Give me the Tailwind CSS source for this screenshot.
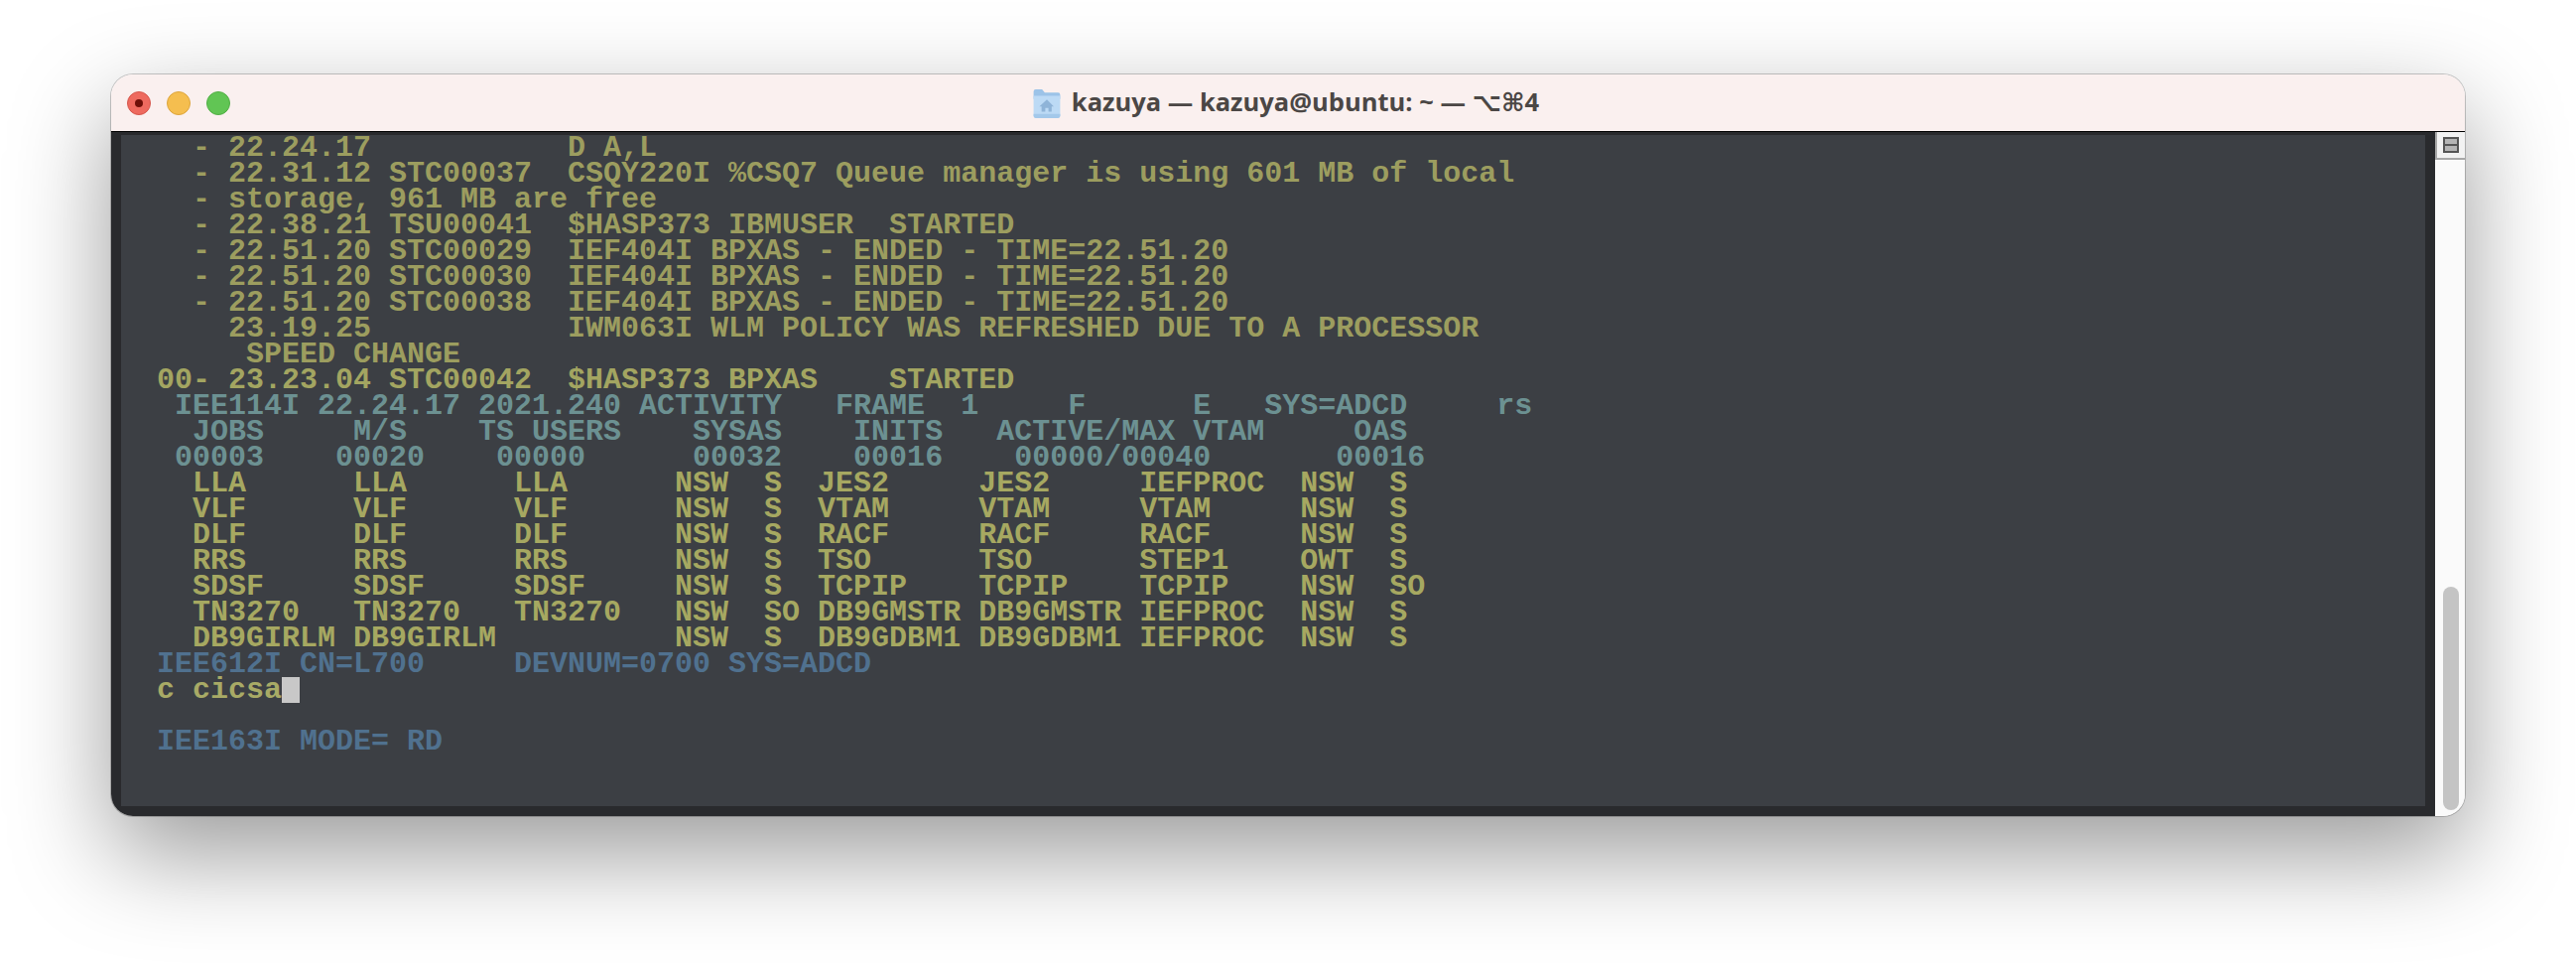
<!DOCTYPE html>
<html lang="en">
<head>
  <meta charset="UTF-8" />
  <title>kazuya — kazuya@ubuntu: ~</title>
  <script src="https://cdn.jsdelivr.net/npm/@tailwindcss/browser@4"></script>
</head>
<body class="bg-white w-[2596px] h-[970px] overflow-hidden">
  <!-- Terminal window -->
  <div class="ml-[112px] mt-[75px] w-[2372px] h-[747px] flex flex-col rounded-[22px] overflow-hidden shadow-[0_0_0_1px_rgba(0,0,0,0.2),0_38px_100px_0_rgba(0,0,0,0.4)]">
    <!-- Title bar -->
    <div class="relative h-[57px] shrink-0 bg-[#faf0ef] flex items-center justify-center">
      <div class="absolute left-[16px] top-[17px] flex gap-[16px]">
        <div class="w-[24px] h-[24px] rounded-full bg-[#ee6a5f] border border-[#d5574d] flex items-center justify-center">
          <div class="w-[8px] h-[8px] rounded-full bg-[#6e0f08]"></div>
        </div>
        <div class="w-[24px] h-[24px] rounded-full bg-[#f5be4f] border border-[#dca53c]"></div>
        <div class="w-[24px] h-[24px] rounded-full bg-[#61c554] border border-[#51ae45]"></div>
      </div>
      <div class="flex items-center gap-[11px] mr-[4px]">
        <svg class="w-[28px] h-[30px]" viewBox="0 0 25 28">
          <path d="M0 3a2 2 0 0 1 2-2h6l2.500 3H23a2 2 0 0 1 2 2v4H0z" fill="#9cc3e8" />
          <path d="M0 7h25v19a2 2 0 0 1-2 2H2a2 2 0 0 1-2-2z" fill="#bcdaf5" />
          <path d="M0 24h25v2a2 2 0 0 1-2 2H2a2 2 0 0 1-2-2z" fill="#a3c8ea" />
          <path d="M12.500 10.500 5.500 17h2v5h3.500v-3.500h3V22H17v-5h2z" fill="#8fb4d8" />
        </svg>
        <span class="font-['Open_Sans','DejaVu_Sans',sans-serif] font-bold text-[25.500px] leading-none text-[#4b4745] whitespace-nowrap">kazuya — kazuya@ubuntu: ~ — <span class="font-['DejaVu_Sans',sans-serif]">⌥⌘</span>4</span>
      </div>
    </div>
    <div class="h-[1px] shrink-0 bg-black"></div>
    <!-- Body -->
    <div class="flex-1 flex min-h-0">
      <div class="flex-1 bg-[#292a2d] pt-[3px] pl-[10px] pr-[10px] pb-[10px]">
        <div class="h-full bg-[#3c3f44] pl-[36px] overflow-hidden">
<pre class="font-['Liberation_Mono',monospace] font-bold text-[30px] leading-[26px] text-[#9c9d5f]">  - 22.24.17           D A,L
  - 22.31.12 STC00037  CSQY220I %CSQ7 Queue manager is using 601 MB of local
  - storage, 961 MB are free
  - 22.38.21 TSU00041  $HASP373 IBMUSER  STARTED
  - 22.51.20 STC00029  IEF404I BPXAS - ENDED - TIME=22.51.20
  - 22.51.20 STC00030  IEF404I BPXAS - ENDED - TIME=22.51.20
  - 22.51.20 STC00038  IEF404I BPXAS - ENDED - TIME=22.51.20
    23.19.25           IWM063I WLM POLICY WAS REFRESHED DUE TO A PROCESSOR
     SPEED CHANGE
<span class="text-[#a3a561]">00- 23.23.04 STC00042  $HASP373 BPXAS    STARTED</span>
<span class="text-[#6c9192]"> IEE114I 22.24.17 2021.240 ACTIVITY   FRAME  1     F      E   SYS=ADCD     rs
  JOBS     M/S    TS USERS    SYSAS    INITS   ACTIVE/MAX VTAM     OAS
 00003    00020    00000      00032    00016    00000/00040       00016</span>
<span class="text-[#a6a861]">  LLA      LLA      LLA      NSW  S  JES2     JES2     IEFPROC  NSW  S
  VLF      VLF      VLF      NSW  S  VTAM     VTAM     VTAM     NSW  S
  DLF      DLF      DLF      NSW  S  RACF     RACF     RACF     NSW  S
  RRS      RRS      RRS      NSW  S  TSO      TSO      STEP1    OWT  S
  SDSF     SDSF     SDSF     NSW  S  TCPIP    TCPIP    TCPIP    NSW  SO
  TN3270   TN3270   TN3270   NSW  SO DB9GMSTR DB9GMSTR IEFPROC  NSW  S
  DB9GIRLM DB9GIRLM          NSW  S  DB9GDBM1 DB9GDBM1 IEFPROC  NSW  S</span>
<span class="text-[#50718f]">IEE612I CN=L700     DEVNUM=0700 SYS=ADCD</span>
<span class="text-[#a8aa66]">c cicsa</span><span class="inline-block w-[18px] h-[26px] bg-[#c8c8c8] align-top"></span>

<span class="text-[#50718f]">IEE163I MODE= RD</span></pre>
        </div>
      </div>
      <!-- Scrollbar -->
      <div class="w-[30px] shrink-0 bg-[#fafafa] flex flex-col">
        <div class="h-[28px] bg-[#f2f2f2] border-l-2 border-b-2 border-[#a8a8a8] pl-[6px] pt-[5px]">
          <div class="w-[16px] h-[16px] bg-[#555555] p-[2px] flex flex-col gap-[2px]">
            <div class="flex-1 bg-[#b5b5b5]"></div>
            <div class="flex-1 bg-[#b5b5b5]"></div>
          </div>
        </div>
        <div class="mt-auto mb-[6px] ml-[8px] w-[16px] h-[225px] rounded-full bg-[#c4c4c4]"></div>
      </div>
    </div>
  </div>
</body>
</html>
